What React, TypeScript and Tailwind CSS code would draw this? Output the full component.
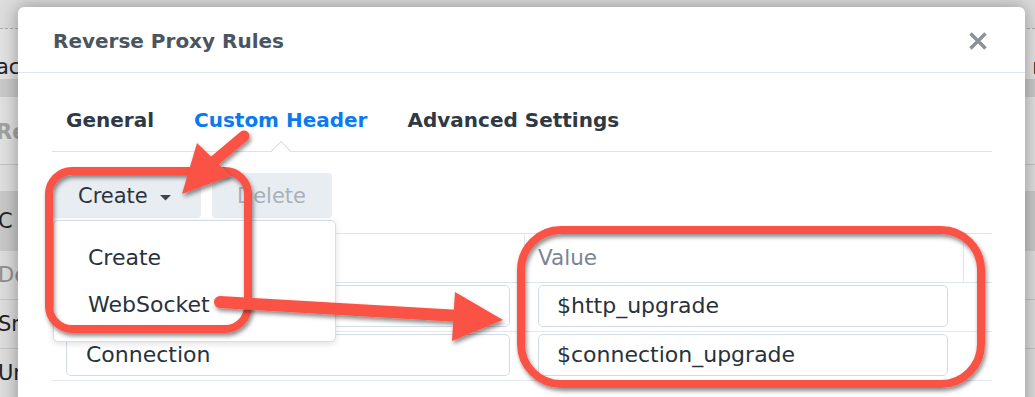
import React from 'react';

const rows = [
  { name: '', value: '$http_upgrade' },
  { name: 'Connection', value: '$connection_upgrade' },
];

function CloseIcon() {
  return (
    <svg width="18" height="18" viewBox="0 0 18 18" className="shrink-0">
      <path d="M1.5 1.5 L16.5 16.5 M16.5 1.5 L1.5 16.5" stroke="#8b9199" strokeWidth="3.4" />
    </svg>
  );
}

function Caret() {
  return (
    <svg width="11" height="6" viewBox="0 0 11 6" className="mt-[4px]">
      <path d="M0 0 H11 L5.5 5.5 Z" fill="#3b444e" />
    </svg>
  );
}

// red markup drawn on top of the screenshot
function Annotations() {
  const red = '#fa5345';
  return (
    <svg className="pointer-events-none absolute inset-0" width="1035" height="397" viewBox="0 0 1035 397">
      <defs>
        <filter id="shade" x="-10%" y="-10%" width="120%" height="130%">
          <feDropShadow dx="1.5" dy="3" stdDeviation="2" floodColor="#000" floodOpacity="0.45" />
        </filter>
      </defs>
      <g filter="url(#shade)" fill="none" stroke={red}>
        <rect x="49" y="171" width="199" height="158" rx="23" strokeWidth="8" />
        <rect x="521" y="230" width="460" height="154" rx="40" strokeWidth="8" />
      </g>
      <g filter="url(#shade)">
        <line x1="244" y1="136" x2="212" y2="163" stroke={red} strokeWidth="11" strokeLinecap="round" />
        <polygon points="197,143 231,176 182,194" fill={red} />
        <line x1="220" y1="302" x2="460" y2="316" stroke={red} strokeWidth="12" strokeLinecap="round" />
        <polygon points="455,292 503,320 452,341" fill={red} />
      </g>
    </svg>
  );
}

function PageBehind() {
  return (
    <div className="flex h-full flex-col bg-[#dcdcdc] text-[21px] leading-[24px] text-[#1f2328]">
      <div className="h-[29px] border-b border-dashed border-[#a9adb2]" />
      <div className="flex h-[51px] items-end justify-between bg-[#e2e2e2] pb-[0px]">
        <span className="-ml-[4px]">ac</span>
        <span className="-mr-[6px]">r</span>
      </div>
      <div className="h-[18px] bg-[#c9c9c9]" />
      <div className="flex h-[69px] justify-between border-b border-[#c4c4c4] bg-[#e0e0e0] pt-[23px] font-bold text-[#a2a2a2]">
        <span className="-ml-[4px]">Rev</span>
      </div>
      <div className="h-[26px] bg-[#dedede]" />
      <div className="flex h-[60px] items-center bg-[#c8c8c8]">
        <span className="-ml-[2px]">C</span>
      </div>
      <div className="flex h-[50px] items-center border-b border-[#c4c4c4] text-[#8e8e8e]">
        <span className="-ml-[2px]">De</span>
      </div>
      <div className="flex h-[49px] items-center border-b border-[#c4c4c4]">
        <span className="-ml-[2px]">Sr</span>
      </div>
      <div className="flex h-[49px] items-center">
        <span className="-ml-[2px]">Ur</span>
      </div>
    </div>
  );
}

export default function App() {
  return (
    <div className="relative h-[397px] w-[1035px] overflow-hidden font-['DejaVu_Sans',sans-serif]">
      <PageBehind />

      <div className="absolute left-[18px] top-[7px] h-[420px] w-[1007px] rounded-t-[6px] bg-white shadow-[0_0_18px_rgba(0,0,0,0.35)]">
        <div className="flex h-[66px] items-center justify-between border-b border-[#dfe5ec] pl-[35px] pr-[38px] pt-[3px]">
          <h2 className="text-[20px] font-bold leading-[24px] text-[#4a5561]">Reverse Proxy Rules</h2>
          <CloseIcon />
        </div>

        <div className="pl-[34px] pr-[33px]">
          <div className="flex gap-[40px] border-b border-[#dbe2ea] pl-[14px] pt-[35px] text-[20px] font-bold leading-[24px]">
            <div className="pb-[19px] text-[#2f3944]">General</div>
            <div className="relative pb-[19px] text-[#0a7bef]">
              Custom Header
              <span className="absolute bottom-[-8px] left-1/2 h-[15px] w-[15px] -translate-x-1/2 rotate-45 border-l border-t border-[#d3dbe5] bg-white" />
            </div>
            <div className="pb-[19px] text-[#2f3944]">Advanced Settings</div>
          </div>

          <div className="relative">
            <div className="flex gap-[11px] pt-[21px] text-[21px] leading-[24px]">
              <button className="flex h-[45px] w-[149px] items-center gap-[12px] rounded-[4px] bg-[#e8edf2] pl-[26px] text-[#2a343f]">
                Create
                <Caret />
              </button>
              <button className="flex h-[45px] w-[120px] items-center rounded-[4px] bg-[#e8edf2] pl-[25px] text-[#a9b0b8]">
                Delete
              </button>
            </div>

            <div className="mt-[15px] border-t border-[#dfe5ec] text-[22px] leading-[24px]">
              <div className="grid h-[49px] grid-cols-[472px_439px_1fr] border-b border-[#dfe5ec] text-[21.5px] text-[#7b8591]">
                <div />
                <div className="flex items-center border-l border-[#dfe5ec] pl-[13px]">Value</div>
                <div className="border-l border-[#dfe5ec]" />
              </div>
              {rows.map((row) => (
                <div
                  key={row.value}
                  className="grid h-[49px] grid-cols-[472px_439px_1fr] border-b border-[#e3e8ee] pt-[2px] text-[#28323d]"
                >
                  <div className="px-[14px]">
                    <div className="flex h-[42px] items-center rounded-[5px] border border-[#d3dce6] px-[19px]">
                      {row.name}
                    </div>
                  </div>
                  <div className="pl-[14px] pr-[15px]">
                    <div className="flex h-[42px] items-center rounded-[5px] border border-[#d3dce6] px-[18px]">
                      {row.value}
                    </div>
                  </div>
                  <div />
                </div>
              ))}
            </div>

            <div className="absolute left-[1px] top-[68px] w-[283px] rounded-[5px] border border-[#d5dde6] bg-white py-[13px] text-[22px] leading-[24px] text-[#28323d] shadow-[0_2px_6px_rgba(0,0,0,0.12)]">
              <div className="flex h-[47px] items-center pl-[34px]">Create</div>
              <div className="flex h-[47px] items-center pl-[34px]">WebSocket</div>
            </div>
          </div>
        </div>
      </div>

      <Annotations />
    </div>
  );
}
